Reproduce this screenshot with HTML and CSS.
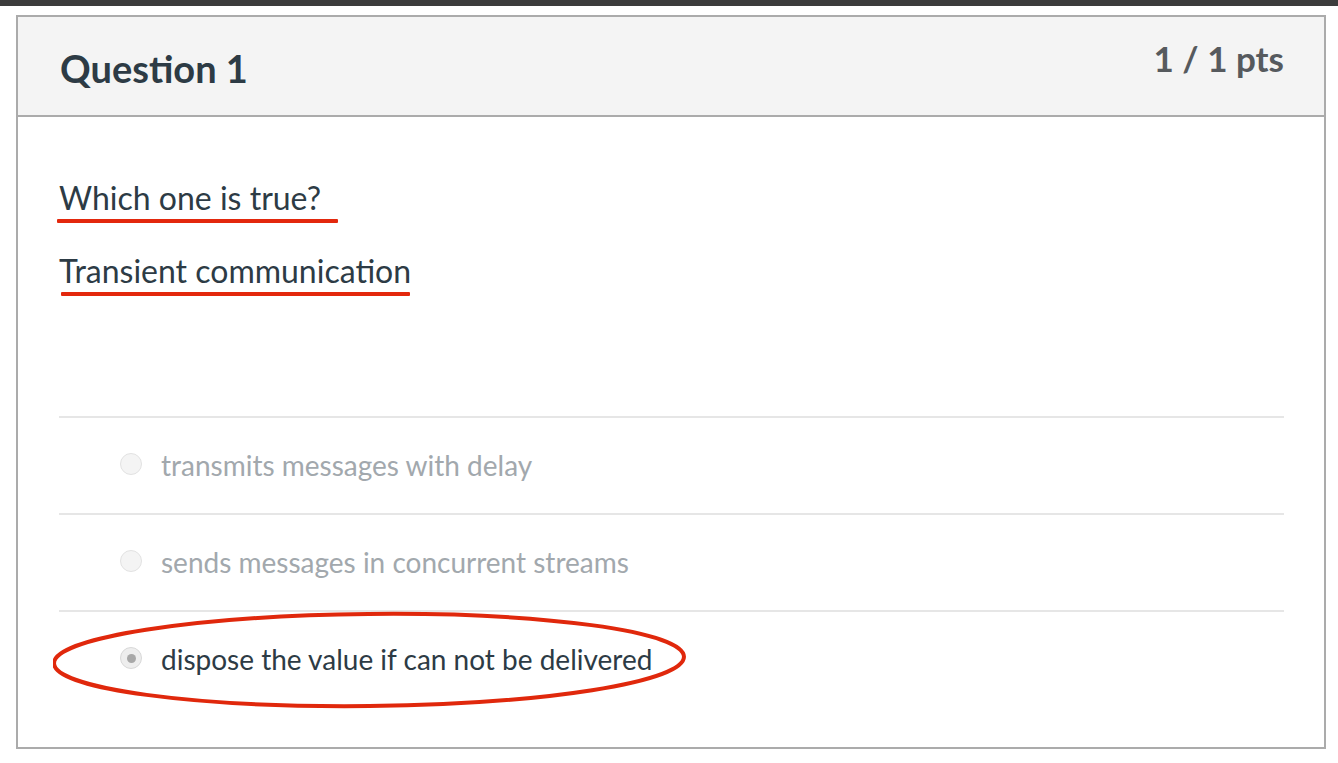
FILE: index.html
```html
<!DOCTYPE html>
<html>
<head>
<meta charset="utf-8">
<link rel="stylesheet" href="styles.css">
</head>
<body>
<div class="topbar"></div>
<div class="card">
  <div class="card-header">
    <h2 class="title">Question 1</h2>
    <div class="pts">1 / 1 pts</div>
  </div>
  <div class="card-body">
    <p class="qtext"><span class="mark mark-a">Which one is true?</span></p>
    <p class="qtext q2"><span class="mark mark-b">Transient communication</span></p>
    <div class="answers">
      <div class="answer muted"><span class="radio"></span><span class="label">transmits messages with delay</span></div>
      <div class="answer muted"><span class="radio"></span><span class="label">sends messages in concurrent streams</span></div>
      <div class="answer chosen">
        <span class="radio checked"></span><span class="label">dispose the value if can not be delivered</span>
        <svg class="ellipse" width="640" height="100" viewBox="0 0 640 100"><ellipse cx="316" cy="49" rx="315" ry="46" fill="none" stroke="#e0280c" stroke-width="4" transform="rotate(-0.6 316 49)"/></svg>
      </div>
    </div>
  </div>
</div>
</body>
</html>
```
FILE: styles.css
```css
html, body { margin: 0; padding: 0; background: #fff; }
body { font-family: Lato, "Noto Sans", sans-serif; color: #2d3b45; }
.topbar { height: 6px; background: #3c3c3c; }
.card {
  margin: 9px 0 0 16px;
  width: 1306px;
  border: 2px solid #ababab;
  box-sizing: content-box;
}
.card-header {
  background: #f4f4f4;
  border-bottom: 2px solid #ababab;
  height: 98px;
  display: flex;
  justify-content: space-between;
  padding: 0 40px 0 42px;
}
.title { margin: 27px 0 0; font-size: 38px; font-weight: 700; color: #2d3b45; line-height: 48px; }
.pts { margin-top: 21px; font-size: 35px; font-weight: 700; color: #565a5e; line-height: 40px; }
.card-body { padding: 57px 40px 40px 41px; }
.qtext { margin: 0; font-size: 32px; line-height: 48px; }
.q2 { margin-top: 25px; }
.mark { position: relative; display: inline-block; }
.mark::after { content: ""; position: absolute; height: 4px; background: #e3280d; border-radius: 1px; }
.mark-a::after { left: -2px; right: -17px; bottom: -1px; }
.mark-b::after { left: 2px; right: 1px; bottom: -1px; }
.answers { margin-top: 121px; }
.answer {
  position: relative;
  border-top: 2px solid #e6e6e6;
  height: 95px;
  box-sizing: content-box;
  display: flex;
  align-items: center;
  padding-left: 61px;
}
.answer > * { position: relative; top: -1px; }
.answer > .ellipse { position: absolute; left: -6px; top: -1px; }
.radio {
  width: 22px; height: 22px; border-radius: 50%;
  border: 1px solid #e2e2e2; background: #f4f4f4;
  box-sizing: border-box; margin-right: 19px; flex: none;
}
.answer > .radio { top: -2px; }
.radio.checked { background: #eee; border-color: #d8d8d8; }
.radio.checked::after { content: ""; position: absolute; left: 6px; top: 6px; width: 9px; height: 9px; border-radius: 50%; background: #a8a8a8; }
.label { font-size: 28px; }
.muted .label { color: #a2a8ad; }
.chosen .label { color: #2d3b45; }
```
